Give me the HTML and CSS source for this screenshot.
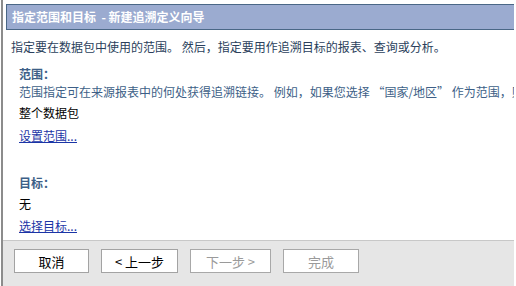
FILE: index.html
```html
<!DOCTYPE html>
<html lang="zh-CN">
<head>
<meta charset="utf-8">
<link rel="stylesheet" href="styles.css">
</head>
<body>
<div class="frame">
  <div class="titlebar">指定范围和目标&nbsp;&nbsp;- 新建追溯定义向导</div>
  <div class="main">
    <p class="intro">指定要在数据包中使用的范围。 然后，指定要用作追溯目标的报表、查询或分析。</p>
    <div class="section">
      <div class="label">范围：</div>
      <div class="hint">范围指定可在来源报表中的何处获得追溯链接。 例如，如果您选择 “国家/地区” 作为范围，则</div>
      <div class="value">整个数据包</div>
      <a class="link" href="#">设置范围...</a>
    </div>
    <div class="section second">
      <div class="label">目标：</div>
      <div class="value">无</div>
      <a class="link" href="#">选择目标...</a>
    </div>
  </div>
  <div class="footer">
    <button class="btn b1">取消</button>
    <button class="btn b2">&lt; 上一步</button>
    <button class="btn b3 off">下一步 &gt;</button>
    <button class="btn b4 off">完成</button>
  </div>
</div>
</body>
</html>
```
FILE: styles.css
```css
html, body {
  margin: 0;
  padding: 0;
  height: 286px;
  overflow: hidden;
  background: #ffffff;
  font-family: "Noto Sans CJK SC", "Liberation Sans", sans-serif;
  font-size: 12px;
}
.frame {
  margin-left: 1px;
  width: 511px;
  height: 286px;
  border-left: 2px solid #8c8c8c;
  display: flex;
  flex-direction: column;
  overflow: hidden;
}
.titlebar {
  margin: 4px 0 0 3px;
  height: 24px;
  line-height: 24px;
  background: #9babd0;
  border-top: 1px solid #4a6786;
  border-bottom: 1px solid #4a6786;
  border-left: 1px solid #4a6786;
  color: #ffffff;
  font-weight: bold;
  padding-left: 5px;
  white-space: nowrap;
}
.main {
  flex: 1;
  overflow: hidden;
}
.intro {
  margin: 8px 0 0 8px;
  line-height: 18px;
  color: #2b3f5c;
  white-space: nowrap;
}
.section {
  margin: 9px 0 0 16px;
  display: flex;
  flex-direction: column;
  align-items: flex-start;
}
.section.second {
  margin-top: 29px;
}
.label {
  line-height: 18px;
  font-weight: bold;
  color: #3d5f87;
}
.hint {
  line-height: 18px;
  color: #3d5f87;
  white-space: nowrap;
}
.value {
  margin-top: 3px;
  line-height: 18px;
  color: #000000;
}
.link {
  margin-top: 5px;
  line-height: 18px;
  color: #1b35a6;
  text-decoration: underline;
}
.section.second .link {
  margin-top: 4px;
}
.footer {
  height: 37px;
  background: #e6e6e6;
  border-top: 1px solid #c8c8c8;
  display: flex;
  align-items: flex-start;
  gap: 12px;
  padding: 8px 0 0 11px;
}
.btn {
  box-sizing: border-box;
  height: 24px;
  background: #ffffff;
  border: 1px solid #a3a3a3;
  font-family: "Noto Sans CJK SC", "Liberation Sans", sans-serif;
  font-size: 13px;
  color: #000000;
  padding: 0;
  margin: 0;
}
.b1 { width: 75px; }
.b2 { width: 77px; }
.b3 { width: 81px; }
.b4 { width: 76px; }
.btn.off {
  color: #9a9a9a;
  border-color: #a8a8a8;
}
```
